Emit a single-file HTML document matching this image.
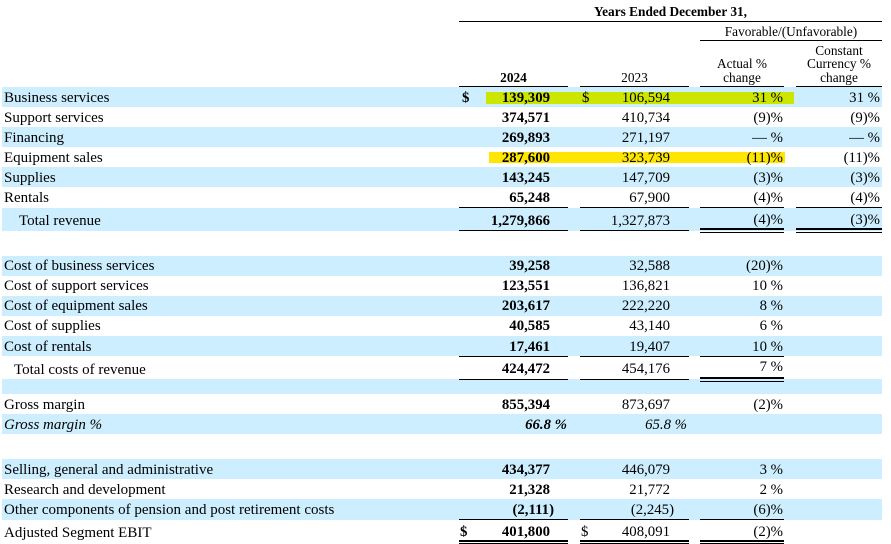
<!DOCTYPE html>
<html><head><meta charset="utf-8"><style>
html,body{margin:0;padding:0;background:#fff}
#p{position:relative;width:891px;height:544px;overflow:hidden;font:14.8px/16px "Liberation Serif",serif;color:#000}
#p div{position:absolute}
.b{left:2px;width:880px;background:#cceeff}
.k{background:#000;height:1px}
.k2{background:#000;height:2px}
.t{white-space:nowrap;font-size:15px}
.s{white-space:nowrap}
.r{white-space:nowrap;text-align:right;width:120px}
.a{left:430px;font-weight:bold}
.c{left:550px}
.d{left:663px}
.e{left:760px}
.h{font-size:13.33px;line-height:14px;text-align:center;white-space:nowrap}
</style></head><body><div id="p">
<div class="b" style="top:87px;height:20px"></div>
<div class="b" style="top:127px;height:20px"></div>
<div class="b" style="top:167px;height:20px"></div>
<div class="b" style="top:208px;height:23px"></div>
<div class="b" style="top:256px;height:20px"></div>
<div class="b" style="top:296px;height:20px"></div>
<div class="b" style="top:336px;height:20px"></div>
<div class="b" style="top:379px;height:15px"></div>
<div class="b" style="top:414px;height:20px"></div>
<div class="b" style="top:459px;height:20px"></div>
<div class="b" style="top:499px;height:21px"></div>
<div style="left:486px;top:92px;width:308px;height:12px;background:#cde600"></div>
<div style="left:489px;top:152px;width:296px;height:11px;background:#ffe600"></div>

<div class="k" style="left:459px;top:21px;width:423px"></div>
<div class="k" style="left:700px;top:40px;width:182px"></div>
<div class="k" style="left:459px;top:86px;width:109px"></div><div class="k" style="left:580px;top:86px;width:109px"></div><div class="k" style="left:700px;top:86px;width:84px"></div><div class="k" style="left:796px;top:86px;width:86px"></div>
<div class="k" style="left:459px;top:207px;width:109px"></div><div class="k" style="left:580px;top:207px;width:109px"></div><div class="k" style="left:700px;top:207px;width:84px"></div><div class="k" style="left:796px;top:207px;width:86px"></div>
<div class="k" style="left:459px;top:230px;width:109px"></div><div class="k" style="left:580px;top:230px;width:109px"></div>
<div class="k2" style="left:700px;top:228px;width:84px"></div><div class="k" style="left:700px;top:232px;width:84px"></div><div class="k2" style="left:796px;top:228px;width:86px"></div><div class="k" style="left:796px;top:232px;width:86px"></div>
<div class="k" style="left:459px;top:356px;width:109px"></div><div class="k" style="left:580px;top:356px;width:109px"></div><div class="k" style="left:700px;top:356px;width:84px"></div>
<div class="k" style="left:459px;top:379px;width:109px"></div><div class="k" style="left:580px;top:379px;width:109px"></div>
<div class="k2" style="left:700px;top:377px;width:84px"></div><div class="k" style="left:700px;top:381px;width:84px"></div>
<div class="k" style="left:459px;top:519px;width:109px"></div><div class="k" style="left:580px;top:519px;width:109px"></div><div class="k" style="left:700px;top:519px;width:84px"></div>
<div class="k2" style="left:459px;top:540px;width:109px"></div><div class="k" style="left:459px;top:543px;width:109px"></div><div class="k2" style="left:580px;top:540px;width:109px"></div><div class="k" style="left:580px;top:543px;width:109px"></div><div class="k2" style="left:700px;top:540px;width:84px"></div><div class="k" style="left:700px;top:543px;width:84px"></div>

<div class="h" style="left:459px;width:423px;top:5px;font-weight:bold">Years Ended December 31,</div>
<div class="h" style="left:700px;width:182px;top:25px">Favorable/(Unfavorable)</div>
<div class="h" style="left:700px;width:84px;top:57px">Actual %</div>
<div class="h" style="left:700px;width:84px;top:71px">change</div>
<div class="h" style="left:796px;width:86px;top:44px">Constant</div>
<div class="h" style="left:796px;width:86px;top:57px">Currency %</div>
<div class="h" style="left:796px;width:86px;top:71px">change</div>
<div class="h" style="left:459px;width:109px;top:71px;font-weight:bold">2024</div>
<div class="h" style="left:580px;width:109px;top:71px">2023</div>

<div style="left:0;top:1px">
<div class="t" style="left:4px;top:89px">Business services</div>
<div class="s" style="left:462px;top:89px;font-weight:bold">$</div><div class="r a" style="top:89px">139,309</div>
<div class="s" style="left:582px;top:89px">$</div><div class="r c" style="top:89px">106,594</div>
<div class="r d" style="top:89px">31 %</div><div class="r e" style="top:89px">31 %</div>

<div class="t" style="left:4px;top:109px">Support services</div><div class="r a" style="top:109px">374,571</div><div class="r c" style="top:109px">410,734</div><div class="r d" style="top:109px">(9)%</div><div class="r e" style="top:109px">(9)%</div>
<div class="t" style="left:4px;top:129px">Financing</div><div class="r a" style="top:129px">269,893</div><div class="r c" style="top:129px">271,197</div><div class="r d" style="top:129px">— %</div><div class="r e" style="top:129px">— %</div>
<div class="t" style="left:4px;top:149px">Equipment sales</div><div class="r a" style="top:149px">287,600</div><div class="r c" style="top:149px">323,739</div><div class="r d" style="top:149px">(11)%</div><div class="r e" style="top:149px">(11)%</div>
<div class="t" style="left:4px;top:169px">Supplies</div><div class="r a" style="top:169px">143,245</div><div class="r c" style="top:169px">147,709</div><div class="r d" style="top:169px">(3)%</div><div class="r e" style="top:169px">(3)%</div>
<div class="t" style="left:4px;top:189px">Rentals</div><div class="r a" style="top:189px">65,248</div><div class="r c" style="top:189px">67,900</div><div class="r d" style="top:189px">(4)%</div><div class="r e" style="top:189px">(4)%</div>
<div class="t" style="left:19px;top:212px">Total revenue</div><div class="r a" style="top:212px">1,279,866</div><div class="r c" style="top:212px">1,327,873</div><div class="r d" style="top:211px">(4)%</div><div class="r e" style="top:211px">(3)%</div>

<div class="t" style="left:4px;top:257px">Cost of business services</div><div class="r a" style="top:257px">39,258</div><div class="r c" style="top:257px">32,588</div><div class="r d" style="top:257px">(20)%</div>
<div class="t" style="left:4px;top:277px">Cost of support services</div><div class="r a" style="top:277px">123,551</div><div class="r c" style="top:277px">136,821</div><div class="r d" style="top:277px">10 %</div>
<div class="t" style="left:4px;top:297px">Cost of equipment sales</div><div class="r a" style="top:297px">203,617</div><div class="r c" style="top:297px">222,220</div><div class="r d" style="top:297px">8 %</div>
<div class="t" style="left:4px;top:317px">Cost of supplies</div><div class="r a" style="top:317px">40,585</div><div class="r c" style="top:317px">43,140</div><div class="r d" style="top:317px">6 %</div>
<div class="t" style="left:4px;top:338px">Cost of rentals</div><div class="r a" style="top:338px">17,461</div><div class="r c" style="top:338px">19,407</div><div class="r d" style="top:338px">10 %</div>
<div class="t" style="left:14px;top:361px">Total costs of revenue</div><div class="r a" style="top:360px">424,472</div><div class="r c" style="top:360px">454,176</div><div class="r d" style="top:358px">7 %</div>

<div class="t" style="left:4px;top:396px">Gross margin</div><div class="r a" style="top:396px">855,394</div><div class="r c" style="top:396px">873,697</div><div class="r d" style="top:396px">(2)%</div>
<div class="t" style="left:4px;top:416px;font-style:italic">Gross margin %</div><div class="r a" style="left:447px;top:416px;font-style:italic">66.8 %</div><div class="r c" style="left:567px;top:416px;font-style:italic">65.8 %</div>

<div class="t" style="left:4px;top:461px">Selling, general and administrative</div><div class="r a" style="top:461px">434,377</div><div class="r c" style="top:461px">446,079</div><div class="r d" style="top:461px">3 %</div>
<div class="t" style="left:4px;top:481px">Research and development</div><div class="r a" style="top:481px">21,328</div><div class="r c" style="top:481px">21,772</div><div class="r d" style="top:481px">2 %</div>
<div class="t" style="left:4px;top:501px">Other components of pension and post retirement costs</div><div class="r a" style="left:434px;top:501px">(2,111)</div><div class="r c" style="left:554px;top:501px">(2,245)</div><div class="r d" style="top:501px">(6)%</div>
<div class="t" style="left:4px;top:524px">Adjusted Segment EBIT</div><div class="s" style="left:460px;top:523px;font-weight:bold">$</div><div class="r a" style="top:523px">401,800</div><div class="s" style="left:581px;top:523px">$</div><div class="r c" style="top:523px">408,091</div><div class="r d" style="top:523px">(2)%</div>
</div>
</div></body></html>
